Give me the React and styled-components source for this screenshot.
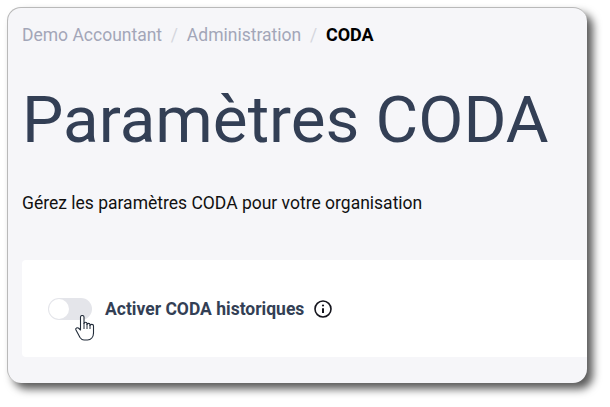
import React from 'react';
import styled, { createGlobalStyle } from 'styled-components';

const Global = createGlobalStyle`
  html, body { margin: 0; padding: 0; background: #fff; overflow: hidden; }
  body { font-family: Roboto, "Liberation Sans", sans-serif; }
`;

const Page = styled.div`
  width: 610px;
  height: 407px;
  padding: 7px 23px 24px 7px;
  box-sizing: border-box;
`;

const Frame = styled.div`
  height: 100%;
  background: #f6f6f9;
  border-radius: 14px;
  border-top: 1px solid #b9b9b9;
  border-left: 1px solid #b9b9b9;
  box-shadow: 6px 6px 9px rgba(0, 0, 0, 0.65);
  padding: 16px 0 26px 14px;
  box-sizing: border-box;
  overflow: hidden;
`;

const Crumbs = styled.nav`
  display: flex;
  align-items: center;
  font-size: 17.5px;
  line-height: 22px;
  color: #a3a6b8;
`;

const Sep = styled.span`
  color: #d5d6de;
  margin: 0 8.75px;
`;

const Current = styled.span`
  color: #000;
  font-weight: 700;
  font-size: 18px;
`;

const Title = styled.h1`
  margin: 36px 0 0;
  font-size: 65.6px;
  line-height: 76px;
  font-weight: 400;
  color: #333f55;
`;

const Subtitle = styled.p`
  margin: 34px 0 0;
  font-size: 17.5px;
  line-height: 22px;
  color: #111;
`;

const Card = styled.section`
  margin-top: 46px;
  height: 97px;
  background: #fff;
  border-radius: 4px 0 0 4px;
  display: flex;
  align-items: center;
  padding-left: 26px;
`;

const Toggle = styled.div`
  position: relative;
  width: 44px;
  height: 22px;
  border-radius: 11px;
  background: #e4e5ea;
`;

const Knob = styled.div`
  width: 20px;
  height: 20px;
  margin: 1px;
  border-radius: 50%;
  background: #fff;
`;

const Cursor = styled.svg`
  position: absolute;
  left: 27px;
  top: 17px;
  width: 20px;
  height: 26px;
`;

const Label = styled.span`
  margin-left: 13px;
  font-size: 17.5px;
  font-weight: 700;
  color: #333f55;
`;

const Info = styled.svg`
  margin-left: 9px;
  width: 20px;
  height: 20px;
`;

export default function App() {
  return (
    <Page>
      <Global />
      <Frame>
        <Crumbs>
          <span>Demo Accountant</span>
          <Sep>/</Sep>
          <span>Administration</span>
          <Sep>/</Sep>
          <Current>CODA</Current>
        </Crumbs>
        <Title>Paramètres CODA</Title>
        <Subtitle>Gérez les paramètres CODA pour votre organisation</Subtitle>
        <Card>
          <Toggle>
            <Knob />
            <Cursor viewBox="0 0 20 26">
              <path
                d="M5.500 2c0-2 3.500-2 3.500 0v6.500c0-1.600 3-1.600 3 0v1c0-1.500 3-1.500 3 0v1c0-1.500 3.500-1.500 3.500.3V18c0 4-2.500 7-6 7H9c-2 0-3-1-4-2.500L1 15c-1-2 1.500-3 3-1.500l1.500 1.500z"
                fill="#fff"
                stroke="#222c3a"
                strokeWidth="1.100"
                strokeLinejoin="round"
              />
              <path d="M9 8v6M12 9v5M15 10v4" stroke="#222c3a" strokeWidth="1" fill="none" />
            </Cursor>
          </Toggle>
          <Label>Activer CODA historiques</Label>
          <Info viewBox="0 0 20 20" fill="none" stroke="#14141c">
            <circle cx="10" cy="10" r="8" strokeWidth="1.600" />
            <path d="M10 9.300v4.600" strokeWidth="2" />
            <circle cx="10" cy="6.500" r="1.100" fill="#14141c" stroke="none" />
          </Info>
        </Card>
      </Frame>
    </Page>
  );
}
